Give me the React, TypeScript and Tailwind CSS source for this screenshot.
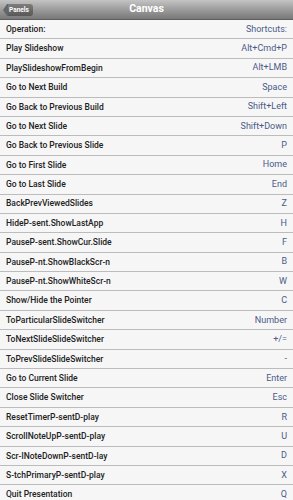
import React from "react";

const rows: [string, string][] = [
  ["Operation:", "Shortcuts:"],
  ["Play Slideshow", "Alt+Cmd+P"],
  ["PlaySlideshowFromBegin", "Alt+LMB"],
  ["Go to Next Build", "Space"],
  ["Go Back to Previous Build", "Shift+Left"],
  ["Go to Next Slide", "Shift+Down"],
  ["Go Back to Previous Slide", "P"],
  ["Go to First Slide", "Home"],
  ["Go to Last Slide", "End"],
  ["BackPrevViewedSlides", "Z"],
  ["HideP-sent.ShowLastApp", "H"],
  ["PauseP-sent.ShowCur.Slide", "F"],
  ["PauseP-nt.ShowBlackScr-n", "B"],
  ["PauseP-nt.ShowWhiteScr-n", "W"],
  ["Show/Hide the Pointer", "C"],
  ["ToParticularSlideSwitcher", "Number"],
  ["ToNextSlideSlideSwitcher", "+/="],
  ["ToPrevSlideSlideSwitcher", "-"],
  ["Go to Current Slide", "Enter"],
  ["Close Slide Switcher", "Esc"],
  ["ResetTimerP-sentD-play", "R"],
  ["ScrollNoteUpP-sentD-play", "U"],
  ["Scr-lNoteDownP-sentD-lay", "D"],
  ["S-tchPrimaryP-sentD-play", "X"],
  ["Quit Presentation", "Q"],
];

export default function App() {
  return (
    <div
      className="w-[293px] h-[500px] overflow-hidden bg-[#f6f6f6]"
      style={{ fontFamily: "Roboto, 'Liberation Sans', sans-serif" }}
    >
      <div className="relative h-[20px] flex items-center justify-center bg-gradient-to-b from-[#c4c4c4] via-[#9c9c9c] to-[#787878] border-b border-[#5e5e5e]">
        <div className="absolute left-[3px] top-[4px] h-[12px] flex items-center">
          <svg width="5" height="12" viewBox="0 0 5 12" className="block">
            <path d="M5 0 L4 0 L0 6 L4 12 L5 12 Z" fill="#666" />
          </svg>
          <div className="h-[12px] pr-[4px] pl-[1px] flex items-center bg-gradient-to-b from-[#7e7e7e] to-[#585858] rounded-r-[3px] text-[6.5px] font-bold text-white leading-none">
            Panels
          </div>
        </div>
        <span className="text-[10.5px] font-bold text-white leading-none">Canvas</span>
      </div>
      <div>
        {rows.map(([l, r], i) => (
          <div
            key={i}
            className="h-[19.4px] flex items-center justify-between px-[6px] border-b border-[#bcbcbc] leading-none"
          >
            <span className="text-[#222] font-medium text-[8.5px]">{l}</span>
            <span className="text-[#4b5a86] text-[9px]">{r}</span>
          </div>
        ))}
      </div>
    </div>
  );
}
